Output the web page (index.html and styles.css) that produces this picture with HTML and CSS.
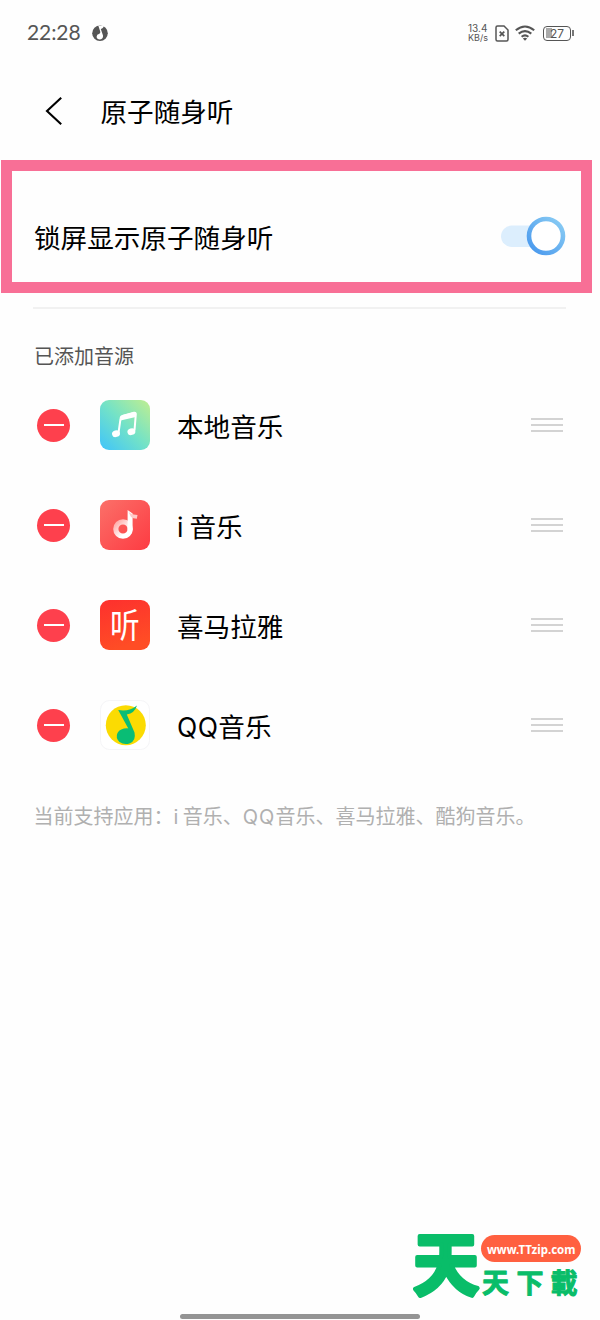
FILE: index.html
```html
<!DOCTYPE html>
<html lang="zh-CN">
<head>
<meta charset="utf-8">
<title>原子随身听</title>
<link rel="stylesheet" href="styles.css">
</head>
<body>
<div class="screen">
  <div class="statusbar">
    <span class="clock">22:28</span>
    <svg class="status-music" width="16" height="18" viewBox="0 0 16 18"><circle cx="8" cy="9.2" r="7.8" fill="#555"/><path d="M6.2 1.2 L8.2 7.6 Q8.7 9.2 7.4 9.8 Q4.6 10.4 4.6 12.8 Q4.8 15.4 8 15.6 Q11.4 15.2 11 11.6 L8.8 5 Q11.5 4.6 12.2 .8 Q9.5 2.6 6.2 1.2Z" fill="#fff"/></svg>
    <div class="status-right">
      <div class="speed"><span>13.4</span><span>KB/s</span></div>
      <svg class="sim" width="14" height="17" viewBox="0 0 14 17" fill="none" stroke="#555" stroke-width="1.5"><path d="M2.5 1 H9 L13 5 V14.5 Q13 16 11.5 16 H2.5 Q1 16 1 14.5 V2.5 Q1 1 2.5 1Z"/><path d="M4.7 6.6 L9.3 11.2 M9.3 6.6 L4.7 11.2" stroke-width="1.7"/></svg>
      <svg class="wifi" width="20" height="16" viewBox="0 0 20 16" fill="none" stroke="#555" stroke-width="2.1"><path d="M.8 5.3 Q10 -2.3 19.2 5.3"/><path d="M3.7 8.6 Q10 3.6 16.3 8.6"/><path d="M6.6 11.8 Q10 9.1 13.4 11.8"/><path d="M10 15.7 L7.8 13.5 Q10 12 12.2 13.5Z" fill="#555" stroke="none"/></svg>
      <div class="battery"><span>27</span></div>
    </div>
  </div>
  <header class="titlebar">
    <svg class="back" width="18" height="30" viewBox="0 0 18 30" fill="none" stroke="#000" stroke-width="2.1"><path d="M16.2 1.8 L2 15 L16.2 28.2"/></svg>
    <h1>原子随身听</h1>
  </header>
  <section class="highlight">
    <span class="label">锁屏显示原子随身听</span>
    <svg class="switch" width="66" height="40" viewBox="0 0 66 40"><defs><linearGradient id="ring" x1="0" y1="1" x2="1" y2="0"><stop offset="0" stop-color="#4696ed"/><stop offset="1" stop-color="#8ccef4"/></linearGradient></defs><rect x="1" y="9.5" width="48" height="21.5" rx="10.75" fill="#dceefd"/><circle cx="46" cy="20" r="17" fill="#fff" stroke="url(#ring)" stroke-width="4.6"/></svg>
  </section>
  <hr class="divider">
  <h2 class="group">已添加音源</h2>
  <ul class="sources">
    <li class="row">
      <span class="remove"></span>
      <svg class="app" viewBox="0 0 50 50"><defs><linearGradient id="g1" x1="0" y1="1" x2="1" y2="0"><stop offset="0" stop-color="#3fc4fb"/><stop offset=".5" stop-color="#73e2c7"/><stop offset="1" stop-color="#c0ee90"/></linearGradient></defs><rect width="50" height="50" rx="9" fill="url(#g1)"/><path d="M18.5 33 L20.6 18.2 Q20.8 16.5 22.4 16 L34 12.8 Q36 12.4 35.8 14.3 L34.5 30.5" fill="none" stroke="#fff" stroke-width="2"/><path d="M20.6 20.4 L20.9 17 Q21.2 15.4 22.8 15 L34 12 Q36.3 11.6 36 14 L35.7 17Z" fill="#fff"/><ellipse cx="16" cy="33.7" rx="4" ry="3.3" transform="rotate(-18 16 33.7)" fill="#fff"/><ellipse cx="31.4" cy="31.7" rx="4" ry="3.3" transform="rotate(-18 31.4 31.7)" fill="#fff"/></svg>
      <span class="label">本地音乐</span><span class="grip"></span>
    </li>
    <li class="row">
      <span class="remove"></span>
      <svg class="app" viewBox="0 0 50 50"><defs><linearGradient id="g2" x1="0" y1="0" x2="1" y2="1"><stop offset="0" stop-color="#fb7069"/><stop offset="1" stop-color="#fd3b42"/></linearGradient><linearGradient id="n2" x1="0" y1="0" x2="1" y2="1"><stop offset="0" stop-color="#ffaaa7"/><stop offset=".7" stop-color="#fff"/></linearGradient></defs><rect width="50" height="50" rx="9" fill="url(#g2)"/><circle cx="23" cy="29" r="7.2" fill="none" stroke="url(#n2)" stroke-width="5.2"/><path d="M27.6 10 L32.6 13.5 V29.5 Q32 34 29 35 L27.6 30Z" fill="#fff"/><path d="M27.6 10 Q29 14.3 37.5 15 L36.8 18.8 Q33 18.8 31 17Z" fill="#ffc9c7"/></svg>
      <span class="label"><i>i</i> 音乐</span><span class="grip"></span>
    </li>
    <li class="row">
      <span class="remove"></span>
      <svg class="app" viewBox="0 0 50 50"><defs><linearGradient id="g3" x1="0" y1="0" x2=".3" y2="1"><stop offset="0" stop-color="#fd302e"/><stop offset="1" stop-color="#ff4d25"/></linearGradient></defs><rect width="50" height="50" rx="9" fill="url(#g3)"/><text class="listen" transform="translate(24.9 37.8) scale(.93 1.05)" x="0" y="0" text-anchor="middle">听</text></svg>
      <span class="label">喜马拉雅</span><span class="grip"></span>
    </li>
    <li class="row">
      <span class="remove"></span>
      <svg class="app" viewBox="0 0 50 50"><rect x=".5" y=".5" width="49" height="49" rx="9" fill="#fff" stroke="#f5f5f7"/><circle cx="25.8" cy="25.2" r="20" fill="#fbdb02"/><path d="M18.2 10 Q29 12 37 5.4 Q34.5 13.2 26.8 14.6 L34.5 32.5 Q36.2 40.5 30 43.2 Q24.5 45.5 19.5 42 Q15.2 37.8 17.5 33 Q20.5 28 28.3 28.4Z" fill="#09bd75"/></svg>
      <span class="label"><b>QQ</b>音乐</span><span class="grip"></span>
    </li>
  </ul>
  <p class="note">当前支持应用：<span>i</span> 音乐、<span class="wide">QQ</span>音乐、喜马拉雅、酷狗音乐。</p>
  <div class="watermark">
    <svg width="176" height="84" viewBox="0 0 176 84">
      <text class="mark-big" transform="translate(5 64.5) scale(1 1.03)" x="0" y="0">天</text>
      <rect x="73" y="10" width="100" height="27" rx="13.5" fill="#ff6040"/>
      <text class="mark-url" x="79" y="28.7">www.TTzip.com</text>
      <text class="mark-small" y="68"><tspan x="74">天</tspan><tspan x="108.5">下</tspan><tspan x="142.5">載</tspan></text>
    </svg>
  </div>
  <div class="homebar"></div>
</div>
</body>
</html>
```
FILE: styles.css
```css
* { box-sizing: border-box; }
body { margin: 0; background: #fff; }
.screen {
  position: relative;
  width: 600px;
  height: 1320px;
  overflow: hidden;
  background: #fefefe;
  color: #000;
  font-family: "Noto Sans CJK SC", sans-serif;
}
.statusbar { display: flex; align-items: center; height: 66px; padding: 0 26px 0 27px; color: #555; }
.clock { width: 65px; padding-bottom: 2px; font: 400 21px/26px Lato, sans-serif; letter-spacing: -.1px; }
.status-right { display: flex; align-items: center; margin-left: auto; }
.speed { display: flex; flex-direction: column; width: 27px; font: 10px/9px Inter, sans-serif; }
.speed span:last-child { font-size: 9px; }
.wifi { margin: 0 8px 0 6px; }
.battery {
  position: relative;
  width: 28px;
  height: 15px;
  margin-right: 3px;
  border: 1.5px solid #555;
  border-radius: 4px;
  background: linear-gradient(90deg, #aaa 6px, transparent 6px) 2px 1px / 20px 10px no-repeat;
  font: 12px/13px Inter, sans-serif;
  text-align: center;
}
.battery::after { content: ""; position: absolute; right: -3.5px; top: 3px; width: 1.5px; height: 6px; background: #777; }
.titlebar { display: flex; align-items: center; height: 94px; padding: 0 0 5px 45px; }
.titlebar h1 { margin: 0 0 0 37.5px; font-size: 26.6px; line-height: 40px; font-weight: 400; }
.highlight {
  display: flex;
  align-items: center;
  justify-content: space-between;
  width: 591px;
  height: 133px;
  margin-left: 1px;
  padding: 19px 15px 0 22px;
  border: 11px solid #f86f96;
}
.label { padding-top: 2px; font-size: 26.6px; line-height: 40px; }
.label i { font-style: normal; }
.label i, .label b { font-family: Inter, sans-serif; font-weight: 400; }
.label b { font-size: 26.5px; letter-spacing: .4px; }
.divider { height: 2px; margin: 14px 34px 0 33px; border: 0; background: #f1f1f1; }
.group { margin: 32px 0 0 34px; font-size: 20px; line-height: 30px; font-weight: 400; color: #555; }
.sources { margin: 4px 0 0; padding: 0; list-style: none; }
.row { display: flex; align-items: center; height: 100px; padding: 0 37px; }
.remove { display: flex; align-items: center; justify-content: center; width: 33px; height: 33px; border-radius: 50%; background: #fe404d; }
.remove::after { content: ""; width: 20px; height: 2px; background: #fff; }
.app { width: 50px; height: 50px; margin: 0 27px 0 30px; }
.listen { font: 400 32px "Noto Sans CJK SC", sans-serif; fill: #fff; }
.grip { width: 32px; height: 14px; margin-left: auto; border: solid #d3d3d3; border-width: 2px 0; background: linear-gradient(#d3d3d3, #d3d3d3) 0 4px / 100% 2px no-repeat; }
.note { margin: 26px 0 0 33.5px; font-size: 20px; line-height: 30px; color: #b0b0b0; white-space: nowrap; font-weight: 400; }
.note span { font-family: Inter, sans-serif; }
.note .wide { letter-spacing: 1px; }
.watermark { position: absolute; left: 408px; top: 1225px; }
.watermark svg { display: block; overflow: visible; }
.mark-big { font: 700 66px "Noto Sans CJK SC", sans-serif; fill: #09bd69; stroke: #09bd69; stroke-width: 4px; stroke-linejoin: round; }
.mark-small { font: 700 27px "Noto Sans CJK TC", sans-serif; fill: #09bd69; stroke: #09bd69; stroke-width: 1px; stroke-linejoin: round; }
.mark-url { font: 700 11.5px "Noto Sans", sans-serif; fill: #fff; }
.homebar { position: absolute; left: 180px; top: 1314px; width: 240px; height: 5px; border-radius: 3px; background: #949494; }
```
